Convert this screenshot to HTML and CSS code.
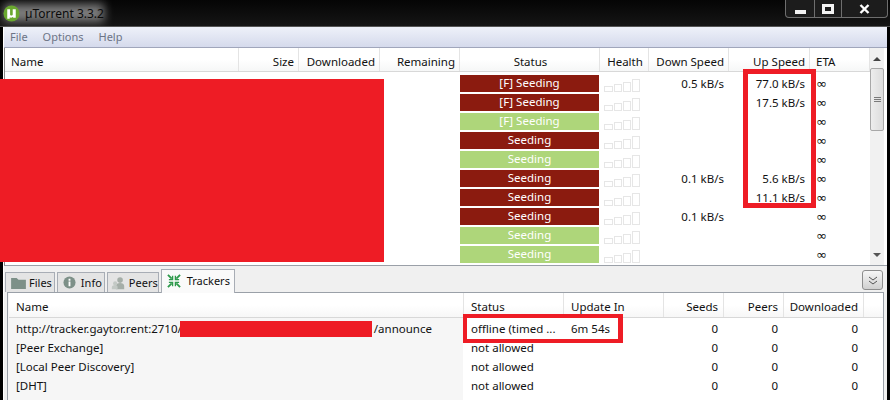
FILE: index.html
```html
<!DOCTYPE html>
<html lang="en">
<head>
<meta charset="utf-8">
<title>µTorrent 3.3.2</title>
<link rel="stylesheet" href="styles.css">
</head>
<body>
<div class="app">
  <header class="titlebar">
    <div class="title">
      <svg class="logo" viewBox="0 0 18 18" width="17" height="17"><circle cx="9" cy="9" r="8.5" fill="#6aa82f"/><path d="M4.500 4.500h3v5.500c0 1.400 2.800 1.400 2.800 0V4.500h3.200v9h-2.800v-1c-1.300 1.200-2.900 1.200-3.600.5v1.500H4.500z" fill="#fff"/></svg>
      <span>µTorrent 3.3.2</span>
    </div>
    <div class="controls">
      <div class="ctl ctl-min"><i></i></div>
      <div class="ctl ctl-max"><i></i></div>
      <div class="ctl ctl-close">
        <svg viewBox="0 0 11 10" width="11" height="10"><path d="M1.500 1l8 8M9.500 1l-8 8" stroke="#fff" stroke-width="2.400" fill="none"/></svg>
      </div>
    </div>
  </header>
  <main class="window">
    <nav class="menu"><span>File</span><span>Options</span><span>Help</span></nav>
    <section class="list">
      <div class="list-main">
        <div class="row head">
          <div>Name</div><div class="r">Size</div><div class="r">Downloaded</div><div class="r">Remaining</div><div class="c">Status</div><div class="c">Health</div><div class="r">Down Speed</div><div class="r">Up Speed</div><div>ETA</div>
        </div>
        <div class="row item"><div></div><div></div><div></div><div></div><div class="bar dark">[F] Seeding</div><div class="health"><i></i><i></i><i></i><i></i></div><div class="r">0.5 kB/s</div><div class="r">77.0 kB/s</div><div class="eta">∞</div></div>
        <div class="row item"><div></div><div></div><div></div><div></div><div class="bar dark">[F] Seeding</div><div class="health"><i></i><i></i><i></i><i></i></div><div class="r"></div><div class="r">17.5 kB/s</div><div class="eta">∞</div></div>
        <div class="row item"><div></div><div></div><div></div><div></div><div class="bar light">[F] Seeding</div><div class="health"><i></i><i></i><i></i><i></i></div><div class="r"></div><div class="r"></div><div class="eta">∞</div></div>
        <div class="row item"><div></div><div></div><div></div><div></div><div class="bar dark">Seeding</div><div class="health"><i></i><i></i><i></i><i></i></div><div class="r"></div><div class="r"></div><div class="eta">∞</div></div>
        <div class="row item"><div></div><div></div><div></div><div></div><div class="bar light">Seeding</div><div class="health"><i></i><i></i><i></i><i></i></div><div class="r"></div><div class="r"></div><div class="eta">∞</div></div>
        <div class="row item"><div></div><div></div><div></div><div></div><div class="bar dark">Seeding</div><div class="health"><i></i><i></i><i></i><i></i></div><div class="r">0.1 kB/s</div><div class="r">5.6 kB/s</div><div class="eta">∞</div></div>
        <div class="row item"><div></div><div></div><div></div><div></div><div class="bar dark">Seeding</div><div class="health"><i></i><i></i><i></i><i></i></div><div class="r"></div><div class="r">11.1 kB/s</div><div class="eta">∞</div></div>
        <div class="row item"><div></div><div></div><div></div><div></div><div class="bar dark">Seeding</div><div class="health"><i></i><i></i><i></i><i></i></div><div class="r">0.1 kB/s</div><div class="r"></div><div class="eta">∞</div></div>
        <div class="row item"><div></div><div></div><div></div><div></div><div class="bar light">Seeding</div><div class="health"><i></i><i></i><i></i><i></i></div><div class="r"></div><div class="r"></div><div class="eta">∞</div></div>
        <div class="row item"><div></div><div></div><div></div><div></div><div class="bar light">Seeding</div><div class="health"><i></i><i></i><i></i><i></i></div><div class="r"></div><div class="r"></div><div class="eta">∞</div></div>
      </div>
      <aside class="scroll">
        <div class="arrow up"></div>
        <div class="thumb"><i></i><i></i><i></i></div>
        <div class="arrow down"></div>
      </aside>
    </section>
    <section class="tabbar">
      <div class="tab tab-files"><svg viewBox="0 0 16 13" width="15" height="12"><path d="M0 1h6l2 2h8v10H0z" fill="#7d9088"/></svg>Files</div>
      <div class="tab tab-info"><svg viewBox="0 0 14 14" width="13" height="13"><circle cx="7" cy="7" r="6.500" fill="#7d9088"/><path d="M6 3h2v2H6zM6 6h2v5H6z" fill="#fff"/></svg>Info</div>
      <div class="tab tab-peers"><svg viewBox="0 0 17 15" width="14" height="14"><circle cx="11" cy="4" r="3.400" fill="#a5aea8"/><path d="M6 15v-4c0-2 2-3.500 5-3.500s5 1.500 5 3.500v4z" fill="#a5aea8"/><circle cx="5" cy="8" r="2.500" fill="#c3c9c5"/><path d="M1 15v-2.500C1 11 3 10 5 10s3 1 3 2.500V15z" fill="#c3c9c5"/></svg>Peers</div>
      <div class="tab active"><svg viewBox="0 0 15 15" width="14" height="14"><path d="M1 1l4 4M14 1l-4 4M1 14l4-4M14 14l-4-4" stroke="#2e9a4c" stroke-width="2" fill="none"/><path d="M6 2v4H2M9 2v4h4M6 13V9H2M9 13V9h4" stroke="#2e9a4c" stroke-width="1.400" fill="none"/></svg>Trackers</div>
      <button class="collapse" type="button" aria-label="Collapse"><svg viewBox="0 0 10 9" width="10" height="9"><path d="M1 1l4 3 4-3M1 5l4 3 4-3" stroke="#555" fill="none"/></svg></button>
    </section>
    <section class="panel">
      <div class="trow thead"><div>Name</div><div>Status</div><div>Update In</div><div class="r">Seeds</div><div class="r">Peers</div><div class="r">Downloaded</div></div>
      <div class="trow titem"><div class="tcell">http://tracker.gaytor.rent:2710/<span class="gap"></span>/announce</div><div class="tcell">offline (timed ...</div><div class="tcell">6m 54s</div><div class="r">0</div><div class="r">0</div><div class="r">0</div></div>
      <div class="trow titem"><div class="tcell">[Peer Exchange]</div><div class="tcell">not allowed</div><div class="tcell"></div><div class="r">0</div><div class="r">0</div><div class="r">0</div></div>
      <div class="trow titem"><div class="tcell">[Local Peer Discovery]</div><div class="tcell">not allowed</div><div class="tcell"></div><div class="r">0</div><div class="r">0</div><div class="r">0</div></div>
      <div class="trow titem"><div class="tcell">[DHT]</div><div class="tcell">not allowed</div><div class="tcell"></div><div class="r">0</div><div class="r">0</div><div class="r">0</div></div>
    </section>
  </main>
  <div class="mark fill m-names"></div>
  <div class="mark fill m-url"></div>
  <div class="mark box m-up"></div>
  <div class="mark box m-status"></div>
</div>
</body>
</html>
```
FILE: styles.css
```css
* { box-sizing: border-box; }
html, body { margin: 0; padding: 0; }
body { width: 890px; height: 400px; overflow: hidden; background: #000; }
.app {
  position: relative; width: 890px; height: 400px; display: flex; flex-direction: column;
  font-family: "Noto Sans", "Open Sans", sans-serif; font-size: 11.5px; color: #111;
}
.titlebar {
  height: 27px; flex: none; display: flex; justify-content: space-between; align-items: flex-start;
  background: linear-gradient(#050505, #151515);
  border-bottom: 1px solid #555;
  overflow: hidden;
}
.title {
  position: relative; isolation: isolate;
  display: flex; align-items: center; gap: 5px; height: 26px; width: 112px; padding-left: 3px;
  font-size: 12px; color: #0b0b0b; white-space: nowrap;
}
.title::before {
  content: ""; position: absolute; z-index: -1; left: 4px; right: 8px; top: 4px; bottom: 4px;
  background: #7c7c7c; filter: blur(5px);
}
.logo { flex: none; }
.controls { display: flex; height: 18px; margin-right: 2px; border: 1px solid #6e6e6e; border-top: 0; border-radius: 0 0 4px 4px; background: #1c1c1c; }
.ctl { display: flex; align-items: center; justify-content: center; height: 17px; border-right: 1px solid #6e6e6e; }
.ctl:last-child { border-right: 0; }
.ctl-min { width: 29px; }
.ctl-min i { display: block; width: 11px; height: 4px; margin-top: 6px; background: #f2f2f2; }
.ctl-max { width: 27px; }
.ctl-max i { display: block; width: 12px; height: 10px; border: 3px solid #f2f2f2; }
.ctl-close { width: 45px; }
.window {
  flex: 1; min-height: 0; display: flex; flex-direction: column; margin: 0 3px 0 3px;
  background: #f0f0f0; border-left: 1px solid #fff;
}
.menu {
  height: 21px; flex: none; display: flex; gap: 15px; align-items: center; padding: 0 0 2px 6px;
  color: #6c7486; font-size: 11px;
  background: linear-gradient(#eef1f9, #d5daec); border-bottom: 1px solid #a0a6bb;
}
.list { height: 218px; flex: none; display: flex; background: #fff; border-bottom: 1px solid #9aa0a8; overflow: hidden; border-left: 1px solid #888; }
.list-main { flex: 1; min-width: 0; }
.row { display: grid; grid-template-columns: 234px 60px 81px 80px 140px 49px 80px 81px 1fr; }
.head { height: 24px; align-items: stretch; margin-bottom: 2px; background: linear-gradient(#fff 50%, #f6f7f7); border-bottom: 1px solid #d8d8d8; }
.head > div { display: flex; align-items: center; padding: 3px 4px 0 6px; border-right: 1px solid #e4e4e4; }
.head > div.r { justify-content: flex-end; }
.head > div.c { justify-content: center; }
.item { height: 19px; align-items: center; }
.r { text-align: right; }
.item > .r { padding-right: 5px; }
.bar { height: 17px; margin: 0 1px 0 0; text-align: center; line-height: 16px; color: #fff; }
.dark { background: #8b1b0f; }
.light { background: #aed67a; }
.eta { padding-left: 6px; font-family: "DejaVu Sans", sans-serif; font-size: 13px; }
.health { display: flex; align-items: flex-end; height: 17px; padding-left: 4px; }
.health i { display: block; width: 8px; border: 1px solid #e6e6e6; margin-right: 1px; }
.health i:nth-child(1) { height: 6px; width: 9px; }
.health i:nth-child(2) { height: 8px; }
.health i:nth-child(3) { height: 10px; }
.health i:nth-child(4) { height: 13px; margin-right: 0; }
.scroll { width: 14px; flex: none; display: flex; flex-direction: column; align-items: center; background: #f1f1f1; margin-right: 3px; }
.arrow { width: 0; height: 0; border-left: 4px solid transparent; border-right: 4px solid transparent; flex: none; }
.arrow.up { border-bottom: 4px solid #444; margin: 9px 0 7px; }
.arrow.down { border-top: 4px solid #555; margin-top: auto; margin-bottom: 8px; }
.thumb { width: 14px; height: 63px; flex: none; display: flex; flex-direction: column; gap: 1px; align-items: center; justify-content: center; background: linear-gradient(90deg, #ededed, #dcdcdc); border: 1px solid #a8a8a8; border-radius: 2px; }
.thumb i { display: block; width: 7px; height: 1px; background: #7a7a7a; }
.tabbar { height: 26px; flex: none; display: flex; align-items: flex-end; gap: 2px; padding-left: 1px; position: relative; background: #f0f0f0; font-size: 11px; }
.tab { height: 20px; display: flex; align-items: center; gap: 5px; padding: 0 2px 0 5px; background: #e4e4e4; border: 1px solid #a8adb5; border-bottom: 0; }
.tab-files { gap: 3px; }
.tab-peers { gap: 4px; padding: 0 0 0 3px; }
.tab.active { height: 24px; background: #fafafa; padding: 0 4px 2px 5px; margin: 0 0 -1px 0; position: relative; z-index: 1; gap: 6px; }
.collapse { display: flex; align-items: center; justify-content: center; width: 21px; height: 20px; padding: 0; background: linear-gradient(#f6f6f6, #d0d0d0); border: 1px solid #8d8d8d; border-radius: 3px; position: absolute; right: 4px; top: 4px; }
.panel { flex: 1; min-height: 0; margin: 0 3px 0 3px; padding-left: 1px; border: 1px solid #9aa0a8; border-bottom: 0; background: linear-gradient(90deg, #f6f6f6 455px, #fff 455px); }
.trow { display: grid; grid-template-columns: 455px 100px 100px 60px 60px 80px; }
.thead { height: 25px; align-items: stretch; background: linear-gradient(#fff 50%, #f7f7f7); border-bottom: 1px solid #d8d8d8; margin-bottom: 1px; }
.thead > div { display: flex; align-items: center; padding: 2px 5px 0 7px; border-right: 1px solid #e4e4e4; }
.thead > div.r { justify-content: flex-end; }
.titem { height: 19px; align-items: center; }
.tcell { padding-left: 7px; white-space: nowrap; }
.gap { display: inline-block; width: 192px; }
.titem > .r { padding-right: 6px; }
.mark { position: absolute; }
.fill { background: #ee1c25; }
.box { border: 5px solid #ee1c25; }
.m-names { left: 0; top: 79px; width: 384px; height: 183px; }
.m-url { left: 180px; top: 321px; width: 192px; height: 16px; }
.m-up { left: 743px; top: 69px; width: 73px; height: 139px; }
.m-status { left: 463px; top: 314px; width: 160px; height: 29px; border-width: 4px; border-right-width: 5px; }
```
